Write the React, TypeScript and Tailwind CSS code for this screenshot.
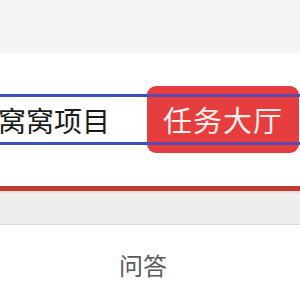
import React from "react";

export default function App() {
  const font = { fontFamily: '"Noto Sans CJK SC", "Noto Sans", sans-serif' };
  return (
    <div className="w-[300px] h-[300px] overflow-hidden bg-white" style={font}>
      <div className="h-[53px] bg-[#f4f4f4]" />
      <div className="h-[133px] pt-[33px]">
        <div className="relative h-[67px] flex items-center">
          <div className="absolute right-[1px] top-0 w-[152px] h-[67px] rounded-[9px] bg-[#e63e3e] flex items-center justify-center">
            <span className="text-[29px] leading-none text-[#fbeeee] tracking-[1px]">任务大厅</span>
          </div>
          <div className="relative w-full h-[51px] border-y-[3px] border-[#3a4fc2] flex items-center overflow-hidden">
            <span className="-ml-[2px] text-[28px] leading-none text-[#1a1a1a]">窝窝项目</span>
          </div>
          <div className="absolute right-[1px] top-[8px] w-[152px] h-[51px] border-y-[3px] border-[#5a4ab2]" />
        </div>
      </div>
      <div className="h-[5px] bg-[#c03a2e]" />
      <div className="h-[2px] bg-[#f6dcd8]" />
      <div className="h-[32px] bg-[#eeeeee] border-b border-[#dcdcdc]" />
      <div className="flex justify-center pt-[28px] pr-[14px]">
        <span className="text-[24px] leading-none text-[#5a5a5a]">问答</span>
      </div>
    </div>
  );
}
